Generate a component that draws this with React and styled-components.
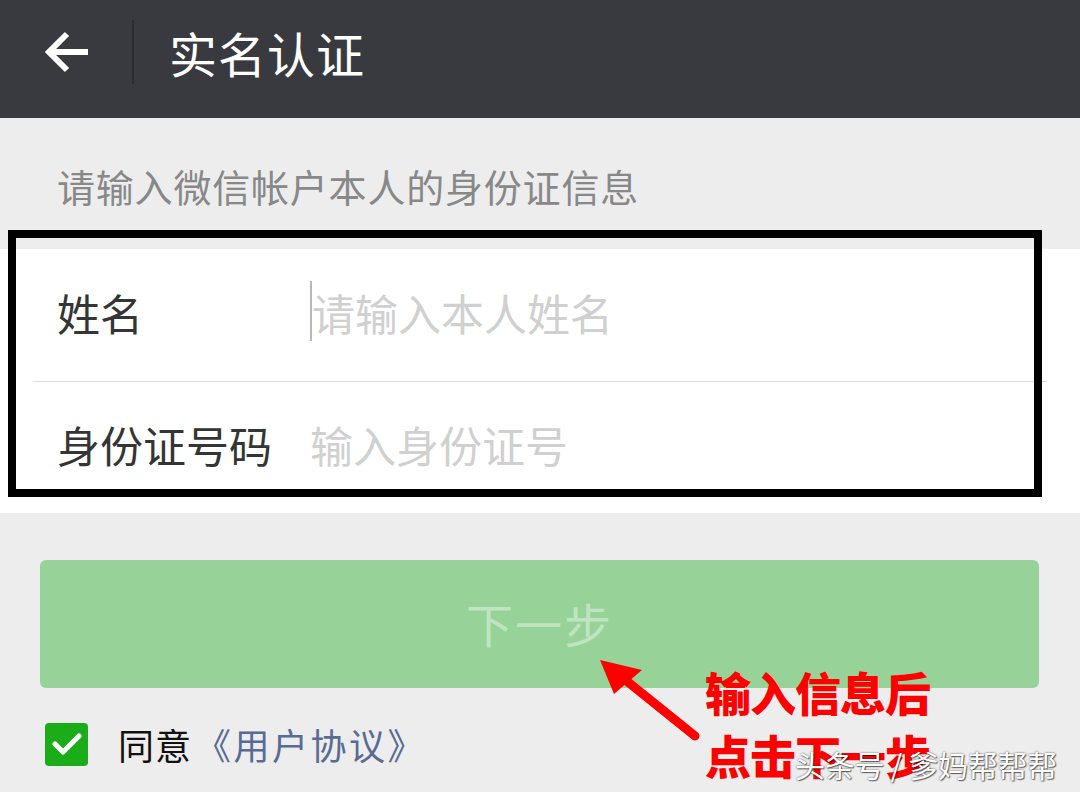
import React from "react";
import styled, { createGlobalStyle } from "styled-components";

const GlobalStyle = createGlobalStyle`
  html, body { margin: 0; padding: 0; background: #ededed; }
  body { font-family: "Noto Sans CJK SC", "Noto Sans", sans-serif; }
`;

const Page = styled.div`
  position: relative;
  width: 1080px;
  height: 792px;
  overflow: hidden;
  background: #ededed;
`;

const Header = styled.header`
  height: 118px;
  background: #393a3f;
  display: flex;
  align-items: center;
  padding: 0 0 14px 45px;
  box-sizing: border-box;
`;

const BackButton = styled.button`
  width: 45px;
  height: 44px;
  padding: 0;
  border: 0;
  background: none;
  display: flex;
`;

const HeaderDivider = styled.span`
  width: 2px;
  height: 64px;
  margin-left: 42px;
  background: #2b2c30;
`;

const Title = styled.h1`
  margin: 0 0 0 35px;
  font-size: 48px;
  font-weight: 400;
  color: #ffffff;
  line-height: 1;
  letter-spacing: 1px;
`;

const Hint = styled.p`
  margin: 0;
  height: 131px;
  display: flex;
  align-items: center;
  padding: 4px 0 0 57px;
  box-sizing: border-box;
  font-size: 38px;
  color: #888888;
  letter-spacing: 0.8px;
`;

const Card = styled.section`
  background: #ffffff;
`;

const Row = styled.div`
  height: ${(p) => p.$h}px;
  display: flex;
  align-items: center;
  padding: 0 0 7px 57px;
  box-sizing: border-box;
`;

const Label = styled.span`
  width: 253px;
  flex-shrink: 0;
  font-size: 43px;
  color: #353535;
`;

const Field = styled.div`
  position: relative;
  display: flex;
  align-items: center;
  font-size: 43px;
  color: #d0d0d0;
  padding-left: ${(p) => (p.$caret ? 2 : 0)}px;
`;

const Caret = styled.span`
  position: absolute;
  left: 0;
  top: 0;
  width: 2px;
  height: 60px;
  background: #b8b8b8;
`;

const RowDivider = styled.div`
  height: 1px;
  margin: 0 33px;
  background: #dcdcdc;
`;

const ButtonArea = styled.div`
  padding: 47px 41px 0 40px;
`;

const NextButton = styled.button`
  width: 100%;
  height: 128px;
  border: 0;
  border-radius: 6px;
  background: #97d398;
  color: #bfe5c0;
  font-family: inherit;
  font-size: 47px;
  letter-spacing: 2px;
  padding: 0 0 3px;
`;

const AgreeRow = styled.div`
  display: flex;
  align-items: center;
  padding-left: 45px;
  margin-top: 30px;
  font-size: 36px;
`;

const CheckBox = styled.span`
  width: 43px;
  height: 43px;
  border-radius: 4px;
  background: #1aad19;
  display: flex;
  align-items: center;
  justify-content: center;
  margin-right: 30px;
`;

const AgreeText = styled.span`
  color: #111111;
  letter-spacing: 1px;
`;

const Link = styled.span`
  color: #576b95;
  margin-left: 3px;
  letter-spacing: 2.5px;
`;

const Highlight = styled.div`
  position: absolute;
  left: 8px;
  top: 230px;
  width: 1034px;
  height: 267px;
  border: 8px solid #000000;
  box-sizing: border-box;
  pointer-events: none;
`;

const ArrowSvg = styled.svg`
  position: absolute;
  left: 590px;
  top: 650px;
  overflow: visible;
`;

const Note = styled.div`
  position: absolute;
  left: 705px;
  top: 660px;
  color: #ff0000;
  font-size: 46px;
  font-weight: 900;
  line-height: 63px;
  letter-spacing: -1px;
`;

const Watermark = styled.div`
  position: absolute;
  left: 795px;
  top: 742px;
  font-size: 30px;
  color: #ffffff;
  letter-spacing: -0.3px;
  text-shadow: 0 0 2px rgba(0, 0, 0, 0.7), 1px 1px 1px rgba(0, 0, 0, 0.5);
  white-space: pre;
`;

export default function App() {
  return (
    <Page>
      <GlobalStyle />
      <Header>
        <BackButton aria-label="返回">
          <svg width="45" height="44" viewBox="0 0 45 44">
            <path
              d="M22 4 L4 22 L22 40 M4 22 H43"
              fill="none"
              stroke="#ffffff"
              strokeWidth="6"
              strokeLinecap="butt"
              strokeLinejoin="miter"
            />
          </svg>
        </BackButton>
        <HeaderDivider />
        <Title>实名认证</Title>
      </Header>
      <Hint>请输入微信帐户本人的身份证信息</Hint>
      <Card>
        <Row $h={132}>
          <Label>姓名</Label>
          <Field $caret>
            <Caret />
            请输入本人姓名
          </Field>
        </Row>
        <RowDivider />
        <Row $h={131}>
          <Label>身份证号码</Label>
          <Field>输入身份证号</Field>
        </Row>
      </Card>
      <ButtonArea>
        <NextButton>下一步</NextButton>
      </ButtonArea>
      <AgreeRow>
        <CheckBox>
          <svg width="30" height="24" viewBox="0 0 30 24">
            <path
              d="M3 12 L11 20 L27 4"
              fill="none"
              stroke="#ffffff"
              strokeWidth="5"
              strokeLinecap="round"
              strokeLinejoin="round"
            />
          </svg>
        </CheckBox>
        <AgreeText>同意</AgreeText>
        <Link>《用户协议》</Link>
      </AgreeRow>

      <Highlight />
      <ArrowSvg width="120" height="100" viewBox="0 0 120 100">
        <line x1="105" y1="86" x2="28" y2="24" stroke="#ff0000" strokeWidth="9" strokeLinecap="round" />
        <polygon points="10,10 52,20 24,44" fill="#ff0000" />
      </ArrowSvg>
      <Note>
        输入信息后
        <br />
        点击下一步
      </Note>
      <Watermark>头条号 / 爹妈帮帮帮</Watermark>
    </Page>
  );
}
